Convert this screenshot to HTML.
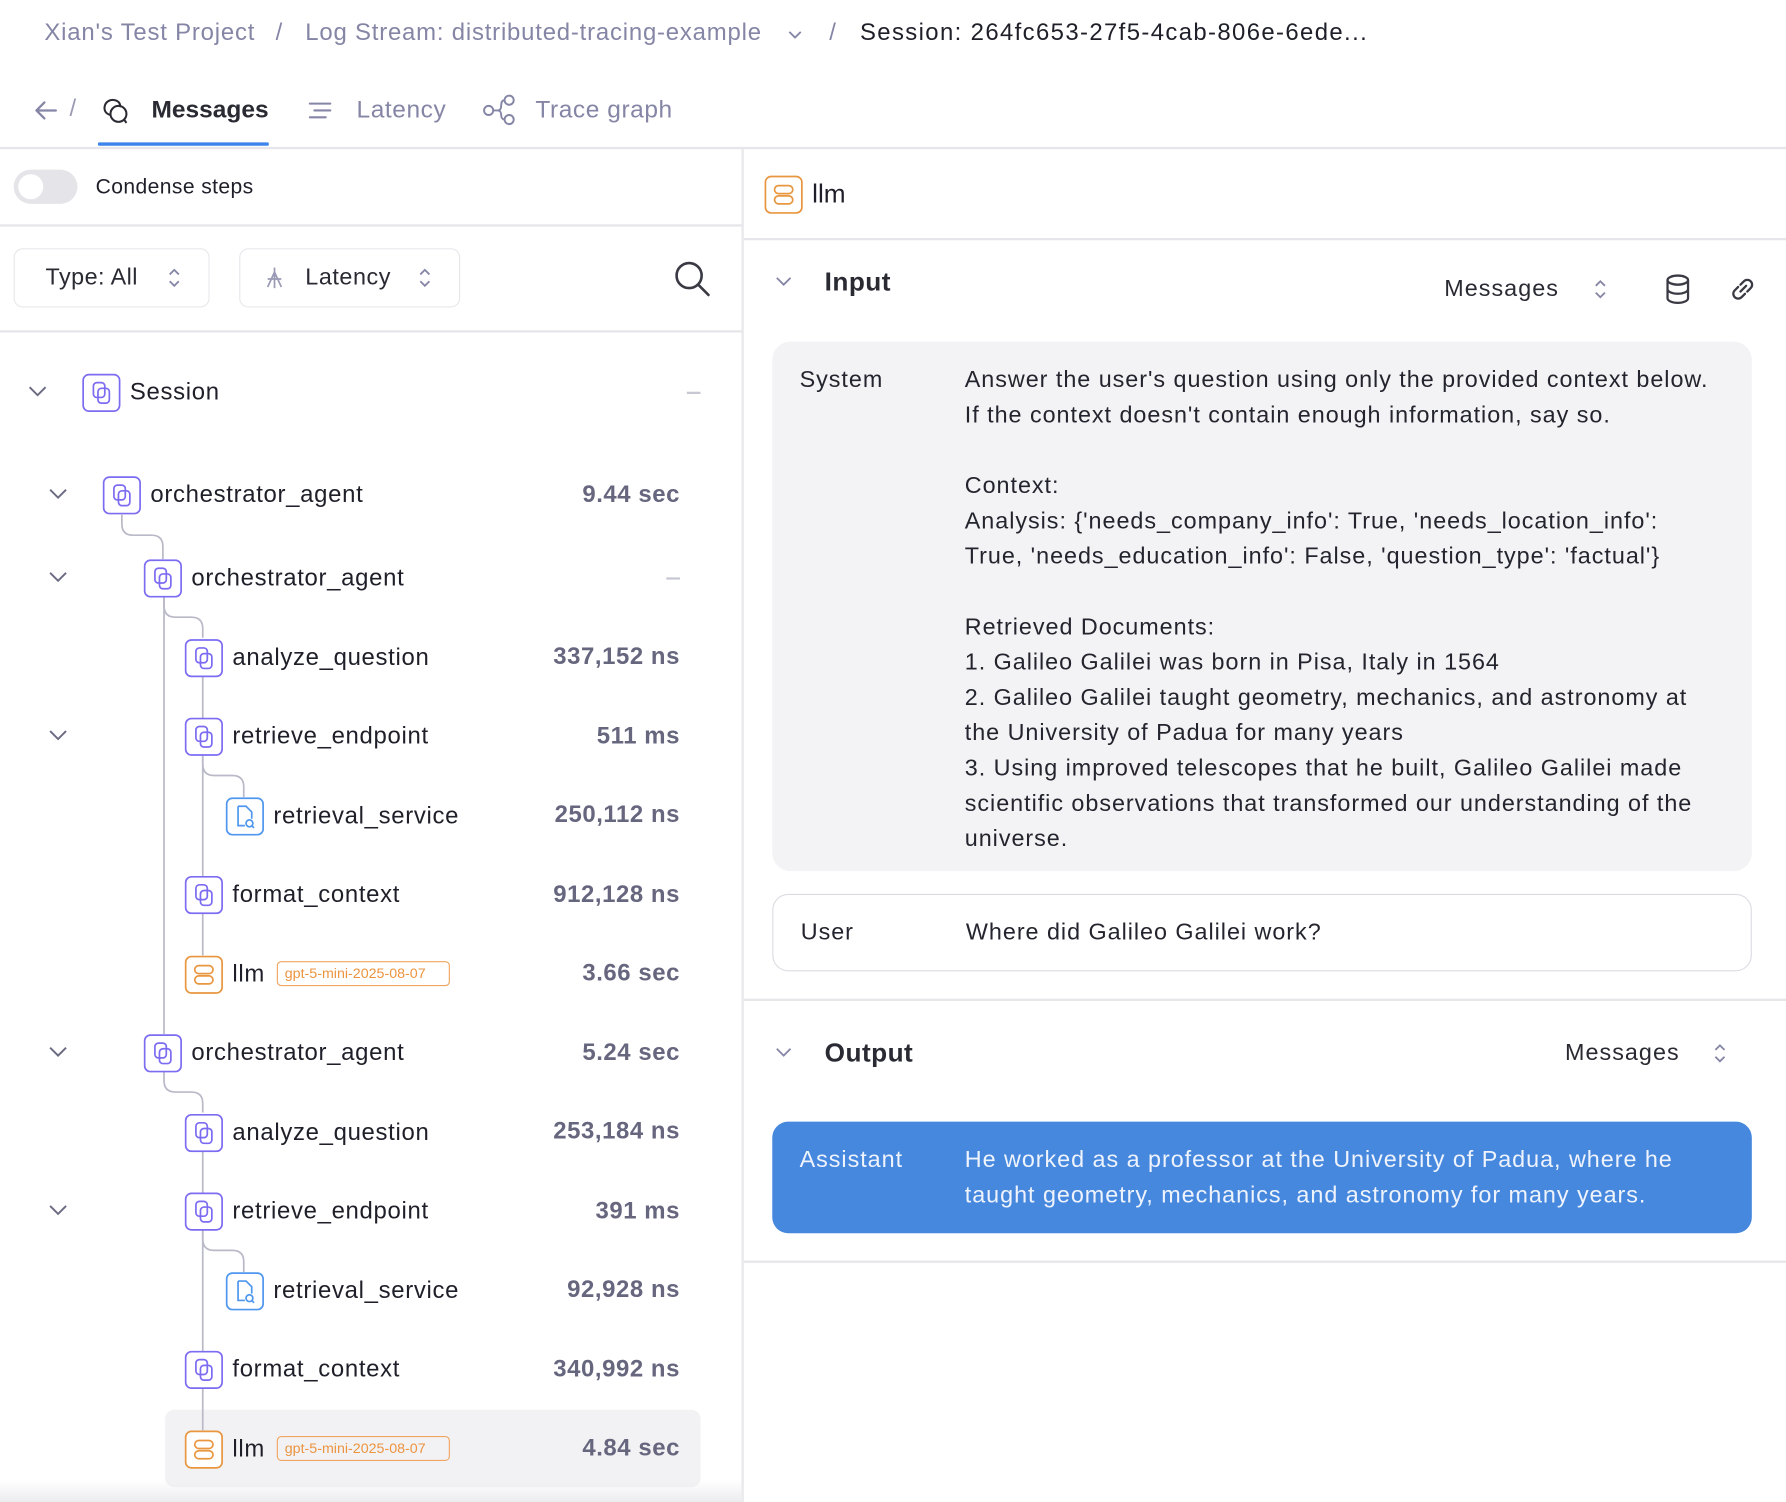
<!DOCTYPE html>
<html><head><meta charset="utf-8">
<style>
html,body{margin:0;padding:0;background:#fff;overflow:hidden}
body{width:1786px;height:1502px}
#w{position:absolute;left:0;top:0;width:1568px;height:1319px;transform:scale(1.13903,1.13874);transform-origin:0 0;font-family:"Liberation Sans",sans-serif;color:#1f1f29}
.a{position:absolute;white-space:nowrap}
.hl{position:absolute;background:#e6e6ea;height:1.5px}
.row{position:absolute;height:32px;line-height:32px;font-size:21px;letter-spacing:0.6px}
.row svg{position:absolute;top:0}
.val{position:absolute;right:971px;font-size:21px;font-weight:bold;color:#66667e;height:32px;line-height:32px;text-align:right;letter-spacing:0.5px}
.badge{position:absolute;height:22px;line-height:21px;top:5px;border:1.5px solid #f0a660;border-radius:4px;color:#ec9440;font-size:12.5px;padding:0 6px;box-sizing:border-box;letter-spacing:0}
.msg{font-size:20.5px;line-height:31px;color:#24242e;letter-spacing:0.85px}
.bc{font-size:21px;color:#8585a6;letter-spacing:0.7px}
</style></head><body><div id="w">

<!-- breadcrumb -->
<div class="a bc" style="left:39px;top:17px">Xian's Test Project</div>
<div class="a bc" style="left:242px;top:17px">/</div>
<div class="a bc" style="left:268px;top:17px">Log Stream: distributed-tracing-example</div>
<svg class="a" style="left:690px;top:22px" width="16" height="16" viewBox="0 0 16 16"><path d="M3 6l5 5 5-5" fill="none" stroke="#8585a6" stroke-width="1.6"/></svg>
<div class="a bc" style="left:728px;top:17px">/</div>
<div class="a" style="left:755px;top:17px;font-size:21px;color:#1f1f29;letter-spacing:1.2px">Session: 264fc653-27f5-4cab-806e-6ede...</div>

<!-- tabs -->
<svg class="a" style="left:28px;top:86px" width="24" height="22" viewBox="0 0 24 22"><path d="M21 11H4M11 4l-7 7 7 7" fill="none" stroke="#8585a6" stroke-width="2" stroke-linecap="round" stroke-linejoin="round"/></svg>
<div class="a" style="left:61px;top:84px;font-size:21px;color:#9a9ab4">/</div>
<svg class="a" style="left:88px;top:84px" width="28" height="28" viewBox="0 0 28 28"><path d="M9 17c-4-1-6-4-5-8s5-6 9-5 5 4 4 6" fill="none" stroke="#2a2a33" stroke-width="1.8"/><circle cx="16" cy="16" r="7" fill="none" stroke="#2a2a33" stroke-width="1.8"/><path d="M21 21l2 3" stroke="#2a2a33" stroke-width="1.8"/></svg>
<div class="a" style="left:133px;top:84px;font-size:21.5px;color:#2a2a33;font-weight:bold">Messages</div>
<div class="a" style="left:86px;top:125px;width:150px;height:3px;background:#3c84ea;border-radius:1px"></div>
<svg class="a" style="left:270px;top:86px" width="24" height="22" viewBox="0 0 24 22"><path d="M2 5h18M6 11h14M2 17h14" fill="none" stroke="#8585a6" stroke-width="1.8" stroke-linecap="round"/></svg>
<div class="a" style="left:313px;top:84px;font-size:21.5px;color:#8585a6;letter-spacing:0.5px">Latency</div>
<svg class="a" style="left:423px;top:83px" width="32" height="28" viewBox="0 0 32 28"><circle cx="6" cy="14" r="4" fill="none" stroke="#8585a6" stroke-width="1.7"/><circle cx="24" cy="5" r="4" fill="none" stroke="#8585a6" stroke-width="1.7"/><circle cx="24" cy="22" r="4" fill="none" stroke="#8585a6" stroke-width="1.7"/><path d="M10 14h4c2 0 3-2 3-4 0-3 1-5 3-5M14 14c2 0 3 2 3 4 0 2 1 4 3 4" fill="none" stroke="#8585a6" stroke-width="1.7"/></svg>
<div class="a" style="left:470px;top:84px;font-size:21.5px;color:#8585a6;letter-spacing:0.5px">Trace graph</div>
<div class="hl" style="left:0;top:129px;width:1568px;height:2px"></div>

<!-- left panel -->
<div class="a" style="left:651px;top:130px;width:2px;height:1189px;background:#e8e8ec"></div>
<div class="a" style="left:12px;top:149px;width:56px;height:30px;border-radius:15px;background:#e4e4e9"></div>
<div class="a" style="left:16px;top:153px;width:22px;height:22px;border-radius:11px;background:#fff"></div>
<div class="a" style="left:84px;top:153px;font-size:18.5px;color:#1f1f29;letter-spacing:0.35px">Condense steps</div>
<div class="hl" style="left:0;top:197px;width:652px"></div>

<div class="a" style="left:12px;top:218px;width:172px;height:52px;box-sizing:border-box;border:1.5px solid #e8e8ec;border-radius:8px"></div>
<div class="a" style="left:40px;top:232px;font-size:20.5px;color:#2a2a33;letter-spacing:0.4px">Type: All</div>
<svg class="a" style="left:146px;top:234px" width="14" height="20" viewBox="0 0 14 20"><path d="M3 7l4-4 4 4M3 13l4 4 4-4" fill="none" stroke="#8585a6" stroke-width="1.6"/></svg>
<div class="a" style="left:210px;top:218px;width:194px;height:52px;box-sizing:border-box;border:1.5px solid #e8e8ec;border-radius:8px"></div>
<svg class="a" style="left:230px;top:233px" width="22" height="22" viewBox="0 0 22 22"><path d="M11 2v18M11 6L5 19M11 6l6 13M5 12h12" fill="none" stroke="#9a9ab4" stroke-width="1.5"/></svg>
<div class="a" style="left:268px;top:232px;font-size:20.5px;color:#2a2a33;letter-spacing:0.5px">Latency</div>
<svg class="a" style="left:366px;top:234px" width="14" height="20" viewBox="0 0 14 20"><path d="M3 7l4-4 4 4M3 13l4 4 4-4" fill="none" stroke="#8585a6" stroke-width="1.6"/></svg>
<svg class="a" style="left:590px;top:227px" width="36" height="36" viewBox="0 0 36 36"><circle cx="15" cy="15" r="11" fill="none" stroke="#3a3a44" stroke-width="2.3"/><path d="M23 23l9 9" stroke="#3a3a44" stroke-width="2.3" stroke-linecap="round"/></svg>
<div class="hl" style="left:0;top:290px;width:652px"></div>

<!-- highlight -->
<div class="a" style="left:145px;top:1238px;width:470px;height:68px;background:#f2f2f4;border-radius:8px"></div>
<div class="a" style="left:0;top:1300px;width:652px;height:19px;background:linear-gradient(#fff0,#ececef)"></div>

<!-- tree lines -->
<svg class="a" style="left:0;top:0" width="652" height="1319" viewBox="0 0 652 1319" fill="none" stroke="#b9b9c8" stroke-width="1.5">
<path d="M107 452v8q0 10 10 10h16q10 0 10 10v11"/>
<path d="M144 524v384"/>
<path d="M144 524v8q0 10 10 10h14q10 0 10 10v8"/>
<path d="M178 594v245"/>
<path d="M178 663v8q0 10 10 10h16q10 0 10 10v9"/>
<path d="M144 941v8q0 10 10 10h14q10 0 10 10v8"/>
<path d="M178 1011v245"/>
<path d="M178 1080v8q0 10 10 10h16q10 0 10 10v9"/>
</svg>

<!-- chevrons -->
<svg class="a" style="left:24px;top:337px" width="18" height="14" viewBox="0 0 18 14"><path d="M2 3l7 7 7-7" fill="none" stroke="#6a6a82" stroke-width="1.7"/></svg>
<svg class="a" style="left:42px;top:427px" width="18" height="14" viewBox="0 0 18 14"><path d="M2 3l7 7 7-7" fill="none" stroke="#6a6a82" stroke-width="1.7"/></svg>
<svg class="a" style="left:42px;top:500px" width="18" height="14" viewBox="0 0 18 14"><path d="M2 3l7 7 7-7" fill="none" stroke="#6a6a82" stroke-width="1.7"/></svg>
<svg class="a" style="left:42px;top:639px" width="18" height="14" viewBox="0 0 18 14"><path d="M2 3l7 7 7-7" fill="none" stroke="#6a6a82" stroke-width="1.7"/></svg>
<svg class="a" style="left:42px;top:917px" width="18" height="14" viewBox="0 0 18 14"><path d="M2 3l7 7 7-7" fill="none" stroke="#6a6a82" stroke-width="1.7"/></svg>
<svg class="a" style="left:42px;top:1056px" width="18" height="14" viewBox="0 0 18 14"><path d="M2 3l7 7 7-7" fill="none" stroke="#6a6a82" stroke-width="1.7"/></svg>

<!-- rows -->
<div class="row" style="left:72px;top:328px"><svg width="34" height="34" viewBox="0 0 34 34"><rect x="1" y="1" width="32" height="32" rx="5" fill="#fff" stroke="#7c6cf2" stroke-width="1.5"/><rect x="10" y="8" width="10" height="13" rx="3" fill="none" stroke="#7c6cf2" stroke-width="1.5"/><rect x="14" y="13" width="10" height="13" rx="3" fill="none" stroke="#7c6cf2" stroke-width="1.5"/></svg><span style="position:absolute;left:42px;top:1px">Session</span></div>
<div class="a" style="left:603px;top:344px;width:12px;height:1.5px;background:#c8c8d4"></div>

<div class="row" style="left:90px;top:418px"><svg width="34" height="34" viewBox="0 0 34 34"><rect x="1" y="1" width="32" height="32" rx="5" fill="#fff" stroke="#7c6cf2" stroke-width="1.5"/><rect x="10" y="8" width="10" height="13" rx="3" fill="none" stroke="#7c6cf2" stroke-width="1.5"/><rect x="14" y="13" width="10" height="13" rx="3" fill="none" stroke="#7c6cf2" stroke-width="1.5"/></svg><span style="position:absolute;left:42px;top:1px">orchestrator_agent</span></div>
<div class="val" style="top:419px">9.44 sec</div>

<div class="row" style="left:126px;top:491px"><svg width="34" height="34" viewBox="0 0 34 34"><rect x="1" y="1" width="32" height="32" rx="5" fill="#fff" stroke="#7c6cf2" stroke-width="1.5"/><rect x="10" y="8" width="10" height="13" rx="3" fill="none" stroke="#7c6cf2" stroke-width="1.5"/><rect x="14" y="13" width="10" height="13" rx="3" fill="none" stroke="#7c6cf2" stroke-width="1.5"/></svg><span style="position:absolute;left:42px;top:1px">orchestrator_agent</span></div>
<div class="a" style="left:585px;top:507px;width:12px;height:1.5px;background:#c8c8d4"></div>

<div class="row" style="left:162px;top:561px"><svg width="34" height="34" viewBox="0 0 34 34"><rect x="1" y="1" width="32" height="32" rx="5" fill="#fff" stroke="#7c6cf2" stroke-width="1.5"/><rect x="10" y="8" width="10" height="13" rx="3" fill="none" stroke="#7c6cf2" stroke-width="1.5"/><rect x="14" y="13" width="10" height="13" rx="3" fill="none" stroke="#7c6cf2" stroke-width="1.5"/></svg><span style="position:absolute;left:42px;top:1px">analyze_question</span></div>
<div class="val" style="top:561px">337,152 ns</div>

<div class="row" style="left:162px;top:630px"><svg width="34" height="34" viewBox="0 0 34 34"><rect x="1" y="1" width="32" height="32" rx="5" fill="#fff" stroke="#7c6cf2" stroke-width="1.5"/><rect x="10" y="8" width="10" height="13" rx="3" fill="none" stroke="#7c6cf2" stroke-width="1.5"/><rect x="14" y="13" width="10" height="13" rx="3" fill="none" stroke="#7c6cf2" stroke-width="1.5"/></svg><span style="position:absolute;left:42px;top:1px">retrieve_endpoint</span></div>
<div class="val" style="top:631px">511 ms</div>

<div class="row" style="left:198px;top:700px"><svg width="34" height="34" viewBox="0 0 34 34"><rect x="1" y="1" width="32" height="32" rx="5" fill="#fff" stroke="#4f97ee" stroke-width="1.5"/><path d="M11 8h7l5 5v6M11 8v17h6" fill="none" stroke="#4f97ee" stroke-width="1.5"/><circle cx="21" cy="23" r="3" fill="none" stroke="#4f97ee" stroke-width="1.5"/><path d="M23 25l2 2" stroke="#4f97ee" stroke-width="1.5"/></svg><span style="position:absolute;left:42px;top:1px">retrieval_service</span></div>
<div class="val" style="top:700px">250,112 ns</div>

<div class="row" style="left:162px;top:769px"><svg width="34" height="34" viewBox="0 0 34 34"><rect x="1" y="1" width="32" height="32" rx="5" fill="#fff" stroke="#7c6cf2" stroke-width="1.5"/><rect x="10" y="8" width="10" height="13" rx="3" fill="none" stroke="#7c6cf2" stroke-width="1.5"/><rect x="14" y="13" width="10" height="13" rx="3" fill="none" stroke="#7c6cf2" stroke-width="1.5"/></svg><span style="position:absolute;left:42px;top:1px">format_context</span></div>
<div class="val" style="top:770px">912,128 ns</div>

<div class="row" style="left:162px;top:839px"><svg width="34" height="34" viewBox="0 0 34 34"><rect x="1" y="1" width="32" height="32" rx="5" fill="#fff" stroke="#e8963f" stroke-width="1.5"/><rect x="9" y="9" width="16" height="7" rx="3.5" fill="none" stroke="#e8963f" stroke-width="1.5"/><rect x="9" y="18" width="16" height="7" rx="3.5" fill="none" stroke="#e8963f" stroke-width="1.5"/></svg><span style="position:absolute;left:42px;top:1px">llm</span><div class="badge" style="left:81px;width:152px">gpt-5-mini-2025-08-07</div></div>
<div class="val" style="top:839px">3.66 sec</div>

<div class="row" style="left:126px;top:908px"><svg width="34" height="34" viewBox="0 0 34 34"><rect x="1" y="1" width="32" height="32" rx="5" fill="#fff" stroke="#7c6cf2" stroke-width="1.5"/><rect x="10" y="8" width="10" height="13" rx="3" fill="none" stroke="#7c6cf2" stroke-width="1.5"/><rect x="14" y="13" width="10" height="13" rx="3" fill="none" stroke="#7c6cf2" stroke-width="1.5"/></svg><span style="position:absolute;left:42px;top:1px">orchestrator_agent</span></div>
<div class="val" style="top:909px">5.24 sec</div>

<div class="row" style="left:162px;top:978px"><svg width="34" height="34" viewBox="0 0 34 34"><rect x="1" y="1" width="32" height="32" rx="5" fill="#fff" stroke="#7c6cf2" stroke-width="1.5"/><rect x="10" y="8" width="10" height="13" rx="3" fill="none" stroke="#7c6cf2" stroke-width="1.5"/><rect x="14" y="13" width="10" height="13" rx="3" fill="none" stroke="#7c6cf2" stroke-width="1.5"/></svg><span style="position:absolute;left:42px;top:1px">analyze_question</span></div>
<div class="val" style="top:978px">253,184 ns</div>

<div class="row" style="left:162px;top:1047px"><svg width="34" height="34" viewBox="0 0 34 34"><rect x="1" y="1" width="32" height="32" rx="5" fill="#fff" stroke="#7c6cf2" stroke-width="1.5"/><rect x="10" y="8" width="10" height="13" rx="3" fill="none" stroke="#7c6cf2" stroke-width="1.5"/><rect x="14" y="13" width="10" height="13" rx="3" fill="none" stroke="#7c6cf2" stroke-width="1.5"/></svg><span style="position:absolute;left:42px;top:1px">retrieve_endpoint</span></div>
<div class="val" style="top:1048px">391 ms</div>

<div class="row" style="left:198px;top:1117px"><svg width="34" height="34" viewBox="0 0 34 34"><rect x="1" y="1" width="32" height="32" rx="5" fill="#fff" stroke="#4f97ee" stroke-width="1.5"/><path d="M11 8h7l5 5v6M11 8v17h6" fill="none" stroke="#4f97ee" stroke-width="1.5"/><circle cx="21" cy="23" r="3" fill="none" stroke="#4f97ee" stroke-width="1.5"/><path d="M23 25l2 2" stroke="#4f97ee" stroke-width="1.5"/></svg><span style="position:absolute;left:42px;top:1px">retrieval_service</span></div>
<div class="val" style="top:1117px">92,928 ns</div>

<div class="row" style="left:162px;top:1186px"><svg width="34" height="34" viewBox="0 0 34 34"><rect x="1" y="1" width="32" height="32" rx="5" fill="#fff" stroke="#7c6cf2" stroke-width="1.5"/><rect x="10" y="8" width="10" height="13" rx="3" fill="none" stroke="#7c6cf2" stroke-width="1.5"/><rect x="14" y="13" width="10" height="13" rx="3" fill="none" stroke="#7c6cf2" stroke-width="1.5"/></svg><span style="position:absolute;left:42px;top:1px">format_context</span></div>
<div class="val" style="top:1187px">340,992 ns</div>

<div class="row" style="left:162px;top:1256px"><svg width="34" height="34" viewBox="0 0 34 34"><rect x="1" y="1" width="32" height="32" rx="5" fill="#fff" stroke="#e8963f" stroke-width="1.5"/><rect x="9" y="9" width="16" height="7" rx="3.5" fill="none" stroke="#e8963f" stroke-width="1.5"/><rect x="9" y="18" width="16" height="7" rx="3.5" fill="none" stroke="#e8963f" stroke-width="1.5"/></svg><span style="position:absolute;left:42px;top:1px">llm</span><div class="badge" style="left:81px;width:152px">gpt-5-mini-2025-08-07</div></div>
<div class="val" style="top:1256px">4.84 sec</div>

<!-- right panel -->
<svg class="a" style="left:671px;top:154px" width="34" height="34" viewBox="0 0 34 34"><rect x="1" y="1" width="32" height="32" rx="5" fill="#fff" stroke="#e8963f" stroke-width="1.5"/><rect x="9" y="9" width="16" height="7" rx="3.5" fill="none" stroke="#e8963f" stroke-width="1.5"/><rect x="9" y="18" width="16" height="7" rx="3.5" fill="none" stroke="#e8963f" stroke-width="1.5"/></svg>
<div class="a" style="left:713px;top:157px;font-size:23px;color:#1f1f29">llm</div>
<div class="hl" style="left:653px;top:209px;width:915px"></div>

<svg class="a" style="left:680px;top:241px" width="16" height="14" viewBox="0 0 16 14"><path d="M2 3l6 6 6-6" fill="none" stroke="#8585a6" stroke-width="1.6"/></svg>
<div class="a" style="left:724px;top:234px;font-size:23px;font-weight:bold;color:#2a2a33;letter-spacing:0.4px">Input</div>
<div class="a" style="left:1268px;top:242px;font-size:20.5px;color:#2a2a33;letter-spacing:0.9px">Messages</div>
<svg class="a" style="left:1398px;top:244px" width="14" height="20" viewBox="0 0 14 20"><path d="M3 7l4-4 4 4M3 13l4 4 4-4" fill="none" stroke="#8585a6" stroke-width="1.6"/></svg>
<svg class="a" style="left:1461px;top:240px" width="24" height="28" viewBox="0 0 24 28"><ellipse cx="12" cy="6" rx="9" ry="4" fill="none" stroke="#3a3a44" stroke-width="2"/><path d="M3 6v16c0 2 4 4 9 4s9-2 9-4V6M3 14c0 2 4 4 9 4s9-2 9-4" fill="none" stroke="#3a3a44" stroke-width="2"/></svg>
<svg class="a" style="left:1517px;top:241px" width="26" height="26" viewBox="0 0 26 26"><path d="M11 15l5-5M9 11l-3 3a4 4 0 006 6l3-3M17 15l3-3a4 4 0 00-6-6l-3 3" fill="none" stroke="#3a3a44" stroke-width="2" stroke-linecap="round"/></svg>

<div class="a" style="left:678px;top:300px;width:860px;height:465px;background:#f3f3f5;border-radius:16px"></div>
<div class="a msg" style="left:702px;top:318px">System</div>
<div class="a msg" style="left:847px;top:318px">Answer the user's question using only the provided context below.<br>If the context doesn't contain enough information, say so.<br><br>Context:<br>Analysis: {'needs_company_info': True, 'needs_location_info':<br>True, 'needs_education_info': False, 'question_type': 'factual'}<br><br>Retrieved Documents:<br>1. Galileo Galilei was born in Pisa, Italy in 1564<br>2. Galileo Galilei taught geometry, mechanics, and astronomy at<br>the University of Padua for many years<br>3. Using improved telescopes that he built, Galileo Galilei made<br>scientific observations that transformed our understanding of the<br>universe.</div>

<div class="a" style="left:678px;top:785px;width:860px;height:68px;box-sizing:border-box;border:1.5px solid #dcdce3;border-radius:14px"></div>
<div class="a msg" style="left:703px;top:803px">User</div>
<div class="a msg" style="left:848px;top:803px">Where did Galileo Galilei work?</div>
<div class="hl" style="left:653px;top:877px;width:915px"></div>

<svg class="a" style="left:680px;top:918px" width="16" height="14" viewBox="0 0 16 14"><path d="M2 3l6 6 6-6" fill="none" stroke="#8585a6" stroke-width="1.6"/></svg>
<div class="a" style="left:724px;top:911px;font-size:23px;font-weight:bold;color:#2a2a33;letter-spacing:0.4px">Output</div>
<div class="a" style="left:1374px;top:913px;font-size:20.5px;color:#2a2a33;letter-spacing:0.9px">Messages</div>
<svg class="a" style="left:1503px;top:915px" width="14" height="20" viewBox="0 0 14 20"><path d="M3 7l4-4 4 4M3 13l4 4 4-4" fill="none" stroke="#8585a6" stroke-width="1.6"/></svg>

<div class="a" style="left:678px;top:985px;width:860px;height:98px;background:#4788df;border-radius:14px"></div>
<div class="a msg" style="left:702px;top:1003px;color:#eef3fc">Assistant</div>
<div class="a msg" style="left:847px;top:1003px;color:#eef3fc">He worked as a professor at the University of Padua, where he<br>taught geometry, mechanics, and astronomy for many years.</div>
<div class="hl" style="left:653px;top:1107px;width:915px"></div>

</div></body></html>
